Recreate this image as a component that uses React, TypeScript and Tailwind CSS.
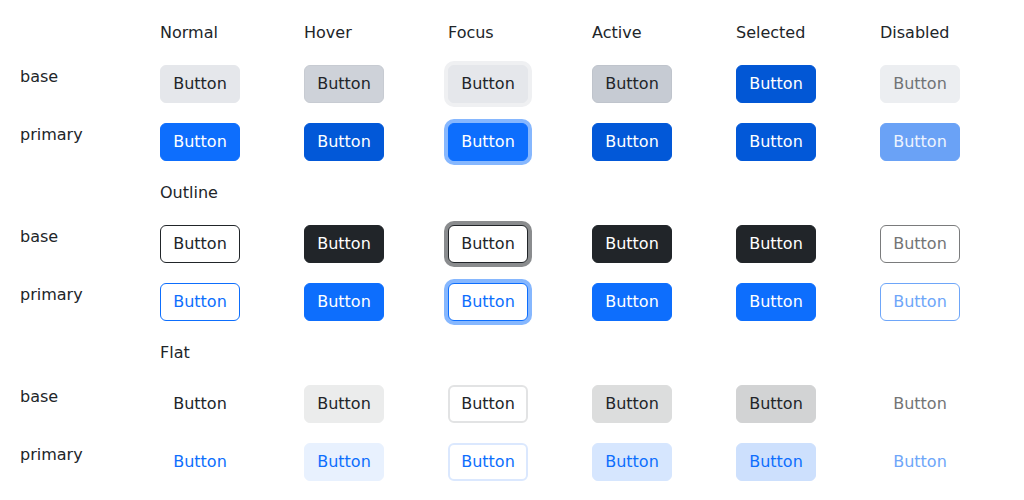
import React from 'react'

const states = ['Normal', 'Hover', 'Focus', 'Active', 'Selected', 'Disabled']

const btn =
  'h-[38px] w-[80px] rounded-md border text-base leading-6 flex items-center justify-center'

// classes per section / variant / state, in the order of `states`
const styles: Record<string, Record<string, string[]>> = {
  solid: {
    base: [
      'bg-[#e5e7eb] border-[#e5e7eb] text-[#212529]',
      'bg-[#ced2d9] border-[#c7cbd2] text-[#212529]',
      'bg-[#e5e7eb] border-[#e5e7eb] text-[#212529] ring-4 ring-[#eff0f2]',
      'bg-[#c6cbd3] border-[#bfc4cc] text-[#212529]',
      'bg-[#0257d5] border-[#0257d5] text-white',
      'bg-[#eceef1] border-[#eceef1] text-[#707376]',
    ],
    primary: [
      'bg-[#0d6efd] border-[#0d6efd] text-white',
      'bg-[#0258d8] border-[#0258d8] text-white',
      'bg-[#0d6efd] border-[#0d6efd] text-white ring-4 ring-[#86b7fe]',
      'bg-[#0258d8] border-[#0258d8] text-white',
      'bg-[#0258d8] border-[#0258d8] text-white',
      'bg-[#6aa2f6] border-[#6aa2f6] text-[#eef4fe]',
    ],
  },
  outline: {
    base: [
      'bg-white border-[#212529] text-[#212529]',
      'bg-[#212529] border-[#212529] text-white',
      'bg-white border-[#212529] text-[#212529] ring-4 ring-[#8a8c8e]',
      'bg-[#212529] border-[#212529] text-white',
      'bg-[#212529] border-[#212529] text-white',
      'bg-white border-[#7a7b7c] text-[#737475]',
    ],
    primary: [
      'bg-white border-[#0d6efd] text-[#0d6efd]',
      'bg-[#0d6efd] border-[#0d6efd] text-white',
      'bg-white border-[#0d6efd] text-[#0d6efd] ring-4 ring-[#86b7fe]',
      'bg-[#0d6efd] border-[#0d6efd] text-white',
      'bg-[#0d6efd] border-[#0d6efd] text-white',
      'bg-white border-[#6ea6f9] text-[#6ea6f9]',
    ],
  },
  flat: {
    base: [
      'bg-transparent border-transparent text-[#212529]',
      'bg-[#ebecec] border-[#ebecec] text-[#212529]',
      'bg-white border-2 border-[#e2e3e4] text-[#212529]',
      'bg-[#dcdddd] border-[#dcdddd] text-[#212529]',
      'bg-[#d2d3d4] border-[#d2d3d4] text-[#212529]',
      'bg-transparent border-transparent text-[#737475]',
    ],
    primary: [
      'bg-transparent border-transparent text-[#0d6efd]',
      'bg-[#e8f1fe] border-[#e8f1fe] text-[#0d6efd]',
      'bg-white border-2 border-[#dbe8fe] text-[#0d6efd]',
      'bg-[#d6e6fe] border-[#d6e6fe] text-[#0d6efd]',
      'bg-[#cde0fd] border-[#cde0fd] text-[#0d6efd]',
      'bg-transparent border-transparent text-[#6ea6f9]',
    ],
  },
}

const sections = [
  { key: 'solid', title: null },
  { key: 'outline', title: 'Outline' },
  { key: 'flat', title: 'Flat' },
]

function HeaderRow({ children }: { children: React.ReactNode }) {
  return (
    <div className="grid grid-cols-[140px_repeat(6,144px)] h-[44px] pt-px">
      <div />
      {children}
    </div>
  )
}

export default function App() {
  return (
    <div className="bg-white min-h-[500px] pl-5 pt-5 font-['DejaVu_Sans',sans-serif] text-base leading-6 text-[#212529]">
      <HeaderRow>
        {states.map((s) => (
          <div key={s}>{s}</div>
        ))}
      </HeaderRow>

      {sections.map((sec) => (
        <div key={sec.key}>
          {sec.title && (
            <HeaderRow>
              <div className="col-span-6">{sec.title}</div>
            </HeaderRow>
          )}
          {(['base', 'primary'] as const).map((variant) => (
            <div key={variant} className="grid grid-cols-[140px_repeat(6,144px)] h-[58px] pt-px">
              <div>{variant}</div>
              {styles[sec.key][variant].map((cls, i) => (
                <div key={i}>
                  <button className={`${btn} ${cls}`}>Button</button>
                </div>
              ))}
            </div>
          ))}
        </div>
      ))}
    </div>
  )
}
